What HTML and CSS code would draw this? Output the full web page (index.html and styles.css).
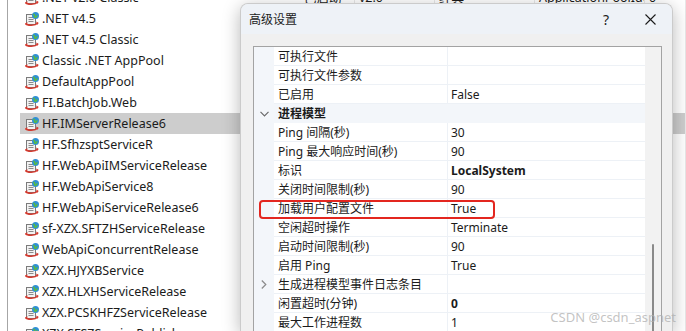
FILE: index.html
```html
<!DOCTYPE html>
<html lang="zh-CN">
    <head>
        <meta charset="UTF-8">
        <title>应用程序池 - 高级设置</title>
        <link rel="stylesheet" href="styles.css">
    </head>
    <body>
        <svg class="defs" width="0" height="0">
            <symbol id="pool" viewBox="0 0 16 16">
                <rect x="2.5" y="3.5" width="9" height="10" fill="#f2f2f2" stroke="#7b7b7b"/>
                <path d="M4.5 6.5h5M4.5 8.5h5M4.5 10.5h5" stroke="#8a8a8a"/>
                <circle cx="11.5" cy="4.5" r="3.5" fill="#2f8fd6"/>
                <path d="M9.3 3.2c1 .2 1.6 1 1.3 2-.3.8.6 1.3 1.3 1 .8-.4.6-1.6 1.6-1.8" stroke="#5bbd3a" stroke-width="1.4" fill="none"/>
                <path d="M1.5 12.5c1.8 2.4 9.6 2.4 12.5 -0.5" stroke="#d33a2f" stroke-width="1.5" fill="none"/>
                <path d="M12 10.6l2.6 1.2-1.4 2.3z" fill="#d33a2f"/>
                <path d="M3.6 11.2l-2.4 1.1 1.6 2z" fill="#d33a2f"/>
            </symbol>
        </svg>

        <!-- Application pool list behind the dialog -->
        <div class="pools">
            <div class="pool-list">
                <div class="pool"><div class="cell name"><svg class="icon"><use href="#pool"/></svg>.NET v2.0 Classic</div><div class="cell">已启动</div><div class="cell">v2.0</div><div class="cell">经典</div><div class="cell">ApplicationPoolIde</div><div class="cell">0</div></div>
                <div class="pool"><div class="cell name"><svg class="icon"><use href="#pool"/></svg>.NET v4.5</div><div class="cell"></div><div class="cell"></div><div class="cell"></div><div class="cell"></div><div class="cell"></div></div>
                <div class="pool"><div class="cell name"><svg class="icon"><use href="#pool"/></svg>.NET v4.5 Classic</div><div class="cell"></div><div class="cell"></div><div class="cell"></div><div class="cell"></div><div class="cell"></div></div>
                <div class="pool"><div class="cell name"><svg class="icon"><use href="#pool"/></svg>Classic .NET AppPool</div><div class="cell"></div><div class="cell"></div><div class="cell"></div><div class="cell"></div><div class="cell"></div></div>
                <div class="pool"><div class="cell name"><svg class="icon"><use href="#pool"/></svg>DefaultAppPool</div><div class="cell"></div><div class="cell"></div><div class="cell"></div><div class="cell"></div><div class="cell"></div></div>
                <div class="pool"><div class="cell name"><svg class="icon"><use href="#pool"/></svg>FI.BatchJob.Web</div><div class="cell"></div><div class="cell"></div><div class="cell"></div><div class="cell"></div><div class="cell"></div></div>
                <div class="pool selected"><div class="cell name"><svg class="icon"><use href="#pool"/></svg>HF.IMServerRelease6</div><div class="cell"></div><div class="cell"></div><div class="cell"></div><div class="cell"></div><div class="cell"></div></div>
                <div class="pool"><div class="cell name"><svg class="icon"><use href="#pool"/></svg>HF.SfhzsptServiceR</div><div class="cell"></div><div class="cell"></div><div class="cell"></div><div class="cell"></div><div class="cell"></div></div>
                <div class="pool"><div class="cell name"><svg class="icon"><use href="#pool"/></svg>HF.WebApiIMServiceRelease</div><div class="cell"></div><div class="cell"></div><div class="cell"></div><div class="cell"></div><div class="cell"></div></div>
                <div class="pool"><div class="cell name"><svg class="icon"><use href="#pool"/></svg>HF.WebApiService8</div><div class="cell"></div><div class="cell"></div><div class="cell"></div><div class="cell"></div><div class="cell"></div></div>
                <div class="pool"><div class="cell name"><svg class="icon"><use href="#pool"/></svg>HF.WebApiServiceRelease6</div><div class="cell"></div><div class="cell"></div><div class="cell"></div><div class="cell"></div><div class="cell"></div></div>
                <div class="pool"><div class="cell name"><svg class="icon"><use href="#pool"/></svg>sf-XZX.SFTZHServiceRelease</div><div class="cell"></div><div class="cell"></div><div class="cell"></div><div class="cell"></div><div class="cell"></div></div>
                <div class="pool"><div class="cell name"><svg class="icon"><use href="#pool"/></svg>WebApiConcurrentRelease</div><div class="cell"></div><div class="cell"></div><div class="cell"></div><div class="cell"></div><div class="cell"></div></div>
                <div class="pool"><div class="cell name"><svg class="icon"><use href="#pool"/></svg>XZX.HJYXBService</div><div class="cell"></div><div class="cell"></div><div class="cell"></div><div class="cell"></div><div class="cell"></div></div>
                <div class="pool"><div class="cell name"><svg class="icon"><use href="#pool"/></svg>XZX.HLXHServiceRelease</div><div class="cell"></div><div class="cell"></div><div class="cell"></div><div class="cell"></div><div class="cell"></div></div>
                <div class="pool"><div class="cell name"><svg class="icon"><use href="#pool"/></svg>XZX.PCSKHFZServiceRelease</div><div class="cell"></div><div class="cell"></div><div class="cell"></div><div class="cell"></div><div class="cell"></div></div>
                <div class="pool"><div class="cell name"><svg class="icon"><use href="#pool"/></svg>XZX.SFSZServicePublish</div><div class="cell"></div><div class="cell"></div><div class="cell"></div><div class="cell"></div><div class="cell"></div></div>
            </div>
        </div>

        <!-- Advanced settings dialog -->
        <div class="dialog">
            <div class="titlebar">
                <span class="title">高级设置</span>
                <span class="tbtn help">?</span>
                <span class="tbtn close">
                    <svg width="11" height="11" viewBox="0 0 11 11"><path d="M0.5 0.5l10 10M10.5 0.5l-10 10" stroke="#1b1b1b" stroke-width="1.1"/></svg>
                </span>
            </div>
            <div class="dialog-body">
                <div class="grid">
                    <div class="rows">
                        <div class="prop"><div class="gutter"></div><div class="pname">可执行文件</div><div class="pval"></div></div>
                        <div class="prop"><div class="gutter"></div><div class="pname">可执行文件参数</div><div class="pval"></div></div>
                        <div class="prop"><div class="gutter"></div><div class="pname">已启用</div><div class="pval">False</div></div>
                        <div class="prop category">
                            <div class="gutter"><svg width="9" height="6" viewBox="0 0 9 6"><path d="M0.5 0.8l4 4 4-4" stroke="#6b6b6b" stroke-width="1.2" fill="none"/></svg></div>
                            <div class="pname">进程模型</div><div class="pval"></div>
                        </div>
                        <div class="prop"><div class="gutter"></div><div class="pname">Ping 间隔(秒)</div><div class="pval">30</div></div>
                        <div class="prop"><div class="gutter"></div><div class="pname">Ping 最大响应时间(秒)</div><div class="pval">90</div></div>
                        <div class="prop"><div class="gutter"></div><div class="pname">标识</div><div class="pval bold">LocalSystem</div></div>
                        <div class="prop"><div class="gutter"></div><div class="pname">关闭时间限制(秒)</div><div class="pval">90</div></div>
                        <div class="prop"><div class="gutter"></div><div class="pname">加载用户配置文件</div><div class="pval">True</div></div>
                        <div class="prop"><div class="gutter"></div><div class="pname">空闲超时操作</div><div class="pval">Terminate</div></div>
                        <div class="prop"><div class="gutter"></div><div class="pname">启动时间限制(秒)</div><div class="pval">90</div></div>
                        <div class="prop"><div class="gutter"></div><div class="pname">启用 Ping</div><div class="pval">True</div></div>
                        <div class="prop">
                            <div class="gutter"><svg width="6" height="9" viewBox="0 0 6 9"><path d="M0.8 0.5l4 4-4 4" stroke="#8a8a8a" stroke-width="1.2" fill="none"/></svg></div>
                            <div class="pname">生成进程模型事件日志条目</div><div class="pval"></div>
                        </div>
                        <div class="prop"><div class="gutter"></div><div class="pname">闲置超时(分钟)</div><div class="pval bold">0</div></div>
                        <div class="prop"><div class="gutter"></div><div class="pname">最大工作进程数</div><div class="pval">1</div></div>
                        <div class="highlight"></div>
                    </div>
                    <div class="scrollbar"><div class="thumb"></div></div>
                </div>
            </div>
        </div>

        <div class="watermark">CSDN @csdn_aspnet</div>
    </body>
</html>
```

FILE: styles.css
```css
/* Page */
body {
  margin: 0;
  width: 686px;
  height: 331px;
  overflow: hidden;
  position: relative;
  background: #ffffff;
  font-family: "Noto Sans", "Noto Sans CJK SC", sans-serif;
  color: #1b1b1b;
}

.defs {
  position: absolute;
}

/* Application pool list */
.pools {
  margin-left: 7px;
  height: 331px;
  border-left: 1px solid #a6a6a6;
  overflow: hidden;
}

.pool-list {
  margin-top: -13px;
}

.pool {
  display: grid;
  grid-template-columns: 280px 55px 80px 100px 110px 1fr;
  height: 21px;
  margin-left: 12px;
  font-size: 12.5px;
}

.pool.selected {
  background-color: #cdcdcd;
}

.cell {
  display: flex;
  align-items: center;
  padding-left: 4px;
  border-right: 1px solid #e8e8e8;
  white-space: nowrap;
  overflow: hidden;
}

.cell.name {
  border-right: none;
  gap: 2px;
}

.icon {
  width: 16px;
  height: 16px;
  flex: none;
}

/* Dialog window */
.dialog {
  position: absolute;
  left: 240px;
  top: 3px;
  width: 433px;
  height: 328px;
  box-sizing: border-box;
  overflow: hidden;
  background-color: #f0f0f0;
  border: 1px solid #cbcbcb;
  border-bottom: none;
  border-radius: 8px 8px 0 0;
  box-shadow: 0 4px 18px rgba(0, 0, 0, 0.28);
  display: flex;
  flex-direction: column;
}

.titlebar {
  height: 30px;
  flex: none;
  display: flex;
  align-items: center;
  padding-left: 8px;
  background-color: #eef2f7;
  font-size: 12px;
}

.title {
  flex: 1;
}

.tbtn {
  width: 44px;
  height: 30px;
  display: flex;
  align-items: center;
  justify-content: center;
}

.help {
  font-size: 14px;
}

.dialog-body {
  padding: 12px 10px 0 12px;
}

/* Property grid */
.grid {
  display: flex;
  height: 300px;
  border: 1px solid #a3a3a3;
  background-color: #ffffff;
}

.rows {
  flex: 1;
  position: relative;
  font-size: 12px;
}

.prop {
  display: grid;
  grid-template-columns: 20px 174px 1fr;
  height: 19px;
}

.gutter {
  background-color: #f3f6fa;
  display: flex;
  align-items: center;
  justify-content: center;
}

.pname,
.pval {
  display: flex;
  align-items: center;
  border-bottom: 1px solid #edf1f6;
  white-space: nowrap;
}

.pname {
  padding-left: 4px;
  border-right: 1px solid #edf1f6;
}

.pval {
  padding-left: 3px;
}

.bold,
.category .pname {
  font-weight: bold;
}

.category .pname,
.category .pval {
  background-color: #f3f6fa;
  border-color: #f3f6fa;
}

/* red annotation box */
.highlight {
  position: absolute;
  left: 5px;
  top: 153px;
  width: 236px;
  height: 19px;
  box-sizing: border-box;
  border: 2px solid #e3261f;
  border-radius: 4px;
}

.scrollbar {
  width: 16px;
  background-color: #f2f2f2;
  padding-top: 197px;
}

.thumb {
  width: 2px;
  height: 120px;
  margin-left: 7px;
  background-color: #8a8a8a;
  border-radius: 1px;
}

.watermark {
  position: absolute;
  right: 10px;
  bottom: 5px;
  font-size: 13px;
  color: rgba(175, 175, 175, 0.75);
}
```
